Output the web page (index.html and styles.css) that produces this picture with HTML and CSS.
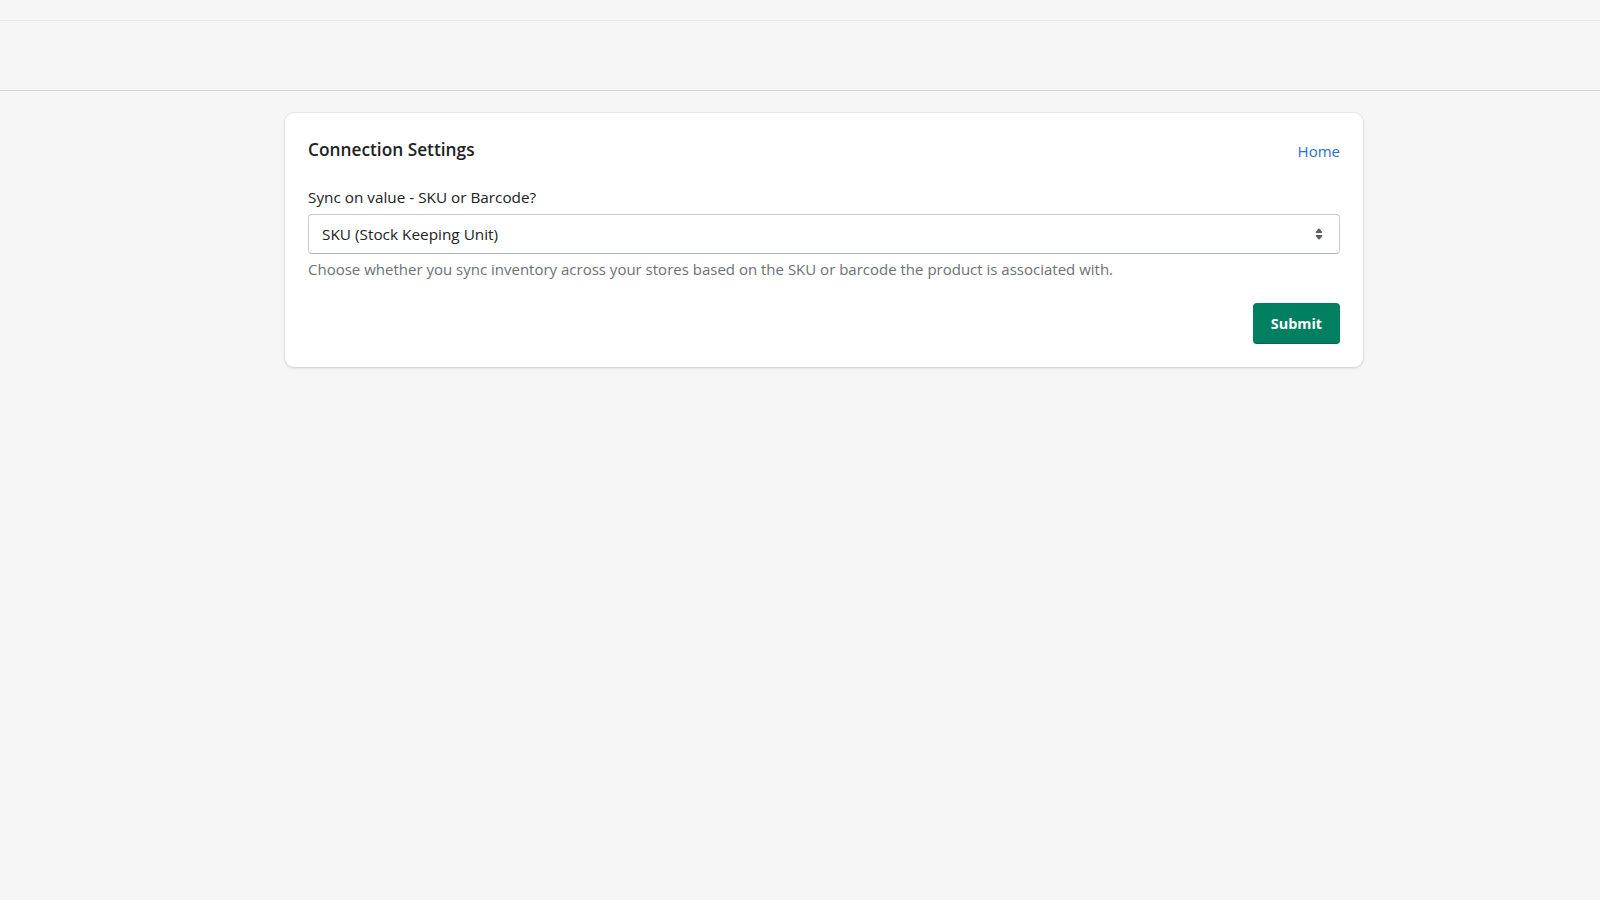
FILE: index.html
```html
<!DOCTYPE html>
<html>
<head>
<meta charset="utf-8">
<link rel="stylesheet" href="styles.css">
</head>
<body>
<div class="topstrip"></div>
<header class="topbar"></header>
<main class="page">
  <section class="card">
    <div class="card-header">
      <h2 class="card-title">Connection Settings</h2>
      <a class="link" href="#">Home</a>
    </div>
    <div class="field">
      <label class="label" for="sync">Sync on value - SKU or Barcode?</label>
      <div class="select">
        <span class="select-value">SKU (Stock Keeping Unit)</span>
        <svg class="select-icon" viewBox="0 0 20 20" width="22" height="22"><path d="M7.676 9h4.648c.563 0 .879-.603.53-1.014l-2.323-2.746a.708.708 0 0 0-1.062 0l-2.324 2.746c-.347.411-.032 1.014.531 1.014Zm4.648 2h-4.648c-.563 0-.878.603-.53 1.014l2.323 2.746c.27.32.792.32 1.062 0l2.323-2.746c.349-.411.033-1.014-.53-1.014Z" fill="#5c5f62"/></svg>
      </div>
      <p class="help">Choose whether you sync inventory across your stores based on the SKU or barcode the product is associated with.</p>
    </div>
    <div class="actions">
      <button class="btn-primary">Submit</button>
    </div>
  </section>
</main>
</body>
</html>
```
FILE: styles.css
```css
* { box-sizing: border-box; }
html, body { margin: 0; padding: 0; }
body {
  background: #f6f6f7;
  font-family: "Open Sans", "Noto Sans", sans-serif;
  color: #202223;
  min-height: 900px;
}
.topstrip {
  height: 21px;
  border-bottom: 1px solid #e4e5e7;
}
.topbar {
  height: 70px;
  border-bottom: 1px solid #d2d5d8;
}
.page {
  display: flex;
  justify-content: center;
  padding-top: 22px;
  padding-left: 48px;
}
.card {
  width: 1078px;
  background: #fff;
  border-radius: 9px;
  box-shadow: 0 0 0 1px rgba(63,63,68,0.05), 0 1px 3px rgba(63,63,68,0.18);
  padding: 22px 23px 23px 23px;
}
.card-header {
  display: flex;
  justify-content: space-between;
  align-items: center;
  height: 30px;
}
.card-title {
  margin: 0;
  font-size: 17.3px;
  font-weight: 600;
  line-height: 26px;
}
.link {
  color: #2c6ecb;
  text-decoration: none;
  font-size: 15px;
  line-height: 22px;
  margin-top: 2px;
}
.field {
  margin-top: 21px;
}
.label {
  display: block;
  font-size: 15.3px;
  line-height: 22px;
  margin-bottom: 6px;
}
.select {
  height: 40px;
  border: 1px solid #c9cccf;
  border-bottom-color: #aeb4b9;
  border-radius: 4px;
  display: flex;
  align-items: center;
  justify-content: space-between;
  padding: 0 9px 0 13px;
  font-size: 15.35px;
}
.select-icon { display: block; }
.help {
  margin: 4px 0 0 0;
  font-size: 15px;
  line-height: 22px;
  color: #6d7175;
}
.actions {
  display: flex;
  justify-content: flex-end;
  margin-top: 23px;
}
.btn-primary {
  background: #008060;
  color: #fff;
  border: none;
  border-radius: 4px;
  height: 41px;
  width: 87px;
  font-family: inherit;
  font-size: 14.4px;
  font-weight: 700;
  box-shadow: inset 0 -1px 0 rgba(0,0,0,0.2);
}
```
